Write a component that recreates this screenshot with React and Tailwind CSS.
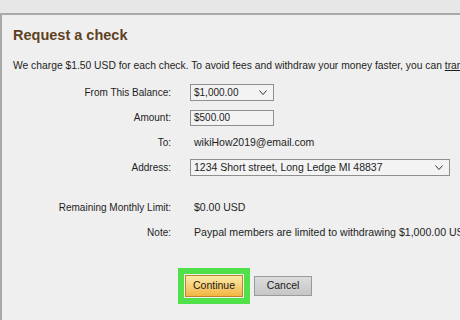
import React from "react";

function Chevron() {
  return (
    <svg width="8" height="5" viewBox="0 0 8 5" className="shrink-0">
      <polyline points="0.5,0.5 4,4.5 7.5,0.5" fill="none" stroke="#333" strokeWidth="1" />
    </svg>
  );
}

function Row({ label, children, className = "" }) {
  return (
    <div className={"grid grid-cols-[158px_1fr] gap-x-[19px] h-[25px] items-center " + className}>
      <div className="text-right">{label}</div>
      <div className="flex items-center whitespace-nowrap">{children}</div>
    </div>
  );
}

export default function App() {
  return (
    <div
      className="w-[460px] h-[320px] overflow-hidden bg-[#e7e7e7] text-[#1e1e1e]"
      style={{ fontFamily: '"Liberation Sans", Arial, sans-serif' }}
    >
      <div className="h-[13px]" />
      <div className="w-[520px] h-[307px] bg-[#efefef] border-t-2 border-l-2 border-[#a9a9a9] text-[10px]">
        <h1 className="pl-[11px] pt-[11px] text-[14.5px] leading-[18px] font-bold text-[#5e4122]">
          Request a check
        </h1>
        <p className="pl-[11px] mt-[15px] text-[10.3px] leading-[14px] whitespace-nowrap">
          We charge $1.50 USD for each check. To avoid fees and withdraw your money faster, you can{" "}
          <span className="underline">transfer money to your bank account</span>
        </p>

        <div className="mt-[7px] pl-[11px]">
          <Row label="From This Balance:">
            <div className="w-[84px] h-[17px] bg-[#f3f3f3] border border-[#8f8f8f] flex items-center justify-between pl-[3px] pr-[6px]">
              <span>$1,000.00</span>
              <Chevron />
            </div>
          </Row>
          <Row label="Amount:">
            <div className="w-[84px] h-[16px] bg-[#f3f3f3] border border-[#8f8f8f] flex items-center pl-[3px]">
              $500.00
            </div>
          </Row>
          <Row label="To:">
            <span className="pl-[4px] text-[10.5px]">wikiHow2019@email.com</span>
          </Row>
          <Row label="Address:">
            <div className="w-[260px] h-[17px] bg-[#f3f3f3] border border-[#8f8f8f] flex items-center justify-between pl-[3px] pr-[6px]">
              <span className="text-[10.5px]">1234 Short street, Long Ledge MI 48837</span>
              <Chevron />
            </div>
          </Row>
          <Row label="Remaining Monthly Limit:" className="mt-[15px]">
            <span className="pl-[4px] text-[10.5px]">$0.00 USD</span>
          </Row>
          <Row label="Note:">
            <span className="pl-[4px] text-[10.6px]">Paypal members are limited to withdrawing $1,000.00 USD per month</span>
          </Row>

          <div className="mt-[23px] flex items-center pl-[165px]">
            <div className="border-[6px] border-[#4fe04a] p-px">
              <button className="w-[58px] h-[22px] border border-[#b8892c] bg-gradient-to-b from-[#fdeaa6] to-[#f2b53e] text-[10.5px] text-[#1a1a1a]">
                Continue
              </button>
            </div>
            <button className="ml-[4px] w-[58px] h-[20px] border border-[#999] bg-gradient-to-b from-[#dcdcdc] to-[#c6c6c6] text-[10.5px] text-[#1a1a1a]">
              Cancel
            </button>
          </div>
        </div>
      </div>
    </div>
  );
}
